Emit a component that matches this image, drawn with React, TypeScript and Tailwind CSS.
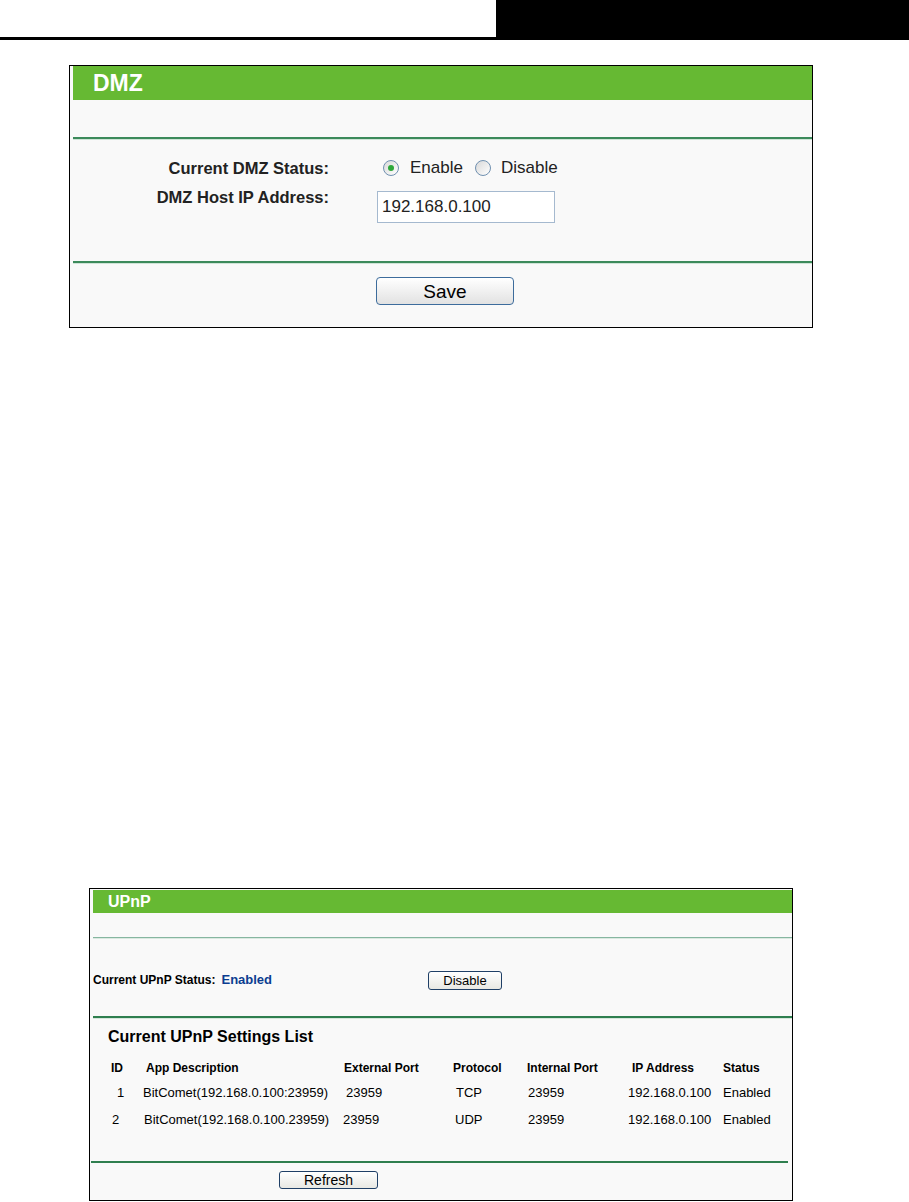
import React from "react";

const font = { fontFamily: '"Liberation Sans", Arial, sans-serif' };

function Radio({ checked }: { checked?: boolean }) {
  return (
    <span className="flex h-[16px] w-[16px] shrink-0 items-center justify-center rounded-full border border-[#7090b0] bg-linear-to-br from-[#d9d9d9] to-[#ffffff]">
      {checked && <span className="h-[6px] w-[6px] rounded-full bg-[#2da83a]" />}
    </span>
  );
}

function DarkSep() {
  return (
    <div>
      <div className="h-[2px] bg-[#3c8a5b]" />
      <div className="h-[1px] bg-[#cfe4d7]" />
    </div>
  );
}

function DmzPanel() {
  return (
    <div className="ml-[69px] mt-[25px] h-[263px] w-[744px] border border-black bg-[#f9f9f9]">
      <div className="ml-[3px]">
        <div className="flex h-[34px] items-center bg-[#66b933] pl-[20px] text-[23px] font-bold text-white">
          DMZ
        </div>
        <div className="h-[37px]" />
        <DarkSep />

        {/* status row */}
        <div className="mt-[16px] flex h-[24px] items-center text-[17px] text-[#222]">
          <div className="w-[256px] text-right text-[16.5px] font-bold">Current DMZ Status:</div>
          <div className="ml-[48px] flex items-center">
            <span className="ml-[6px]">
              <Radio checked />
            </span>
            <span className="ml-[11px]">Enable</span>
            <span className="ml-[12px]">
              <Radio />
            </span>
            <span className="ml-[10px]">Disable</span>
          </div>
        </div>

        {/* host row */}
        <div className="mt-[5px] flex items-start text-[#222]">
          <div className="w-[256px] text-right text-[16.5px] font-bold leading-[24px]">DMZ Host IP Address:</div>
          <div className="ml-[48px] mt-[6px] flex h-[32px] w-[178px] items-center border border-[#a5b9cf] bg-white pl-[4px] text-[17px]">
            192.168.0.100
          </div>
        </div>

        <div className="h-[38px]" />
        <DarkSep />

        <div className="mt-[13px] flex">
          <button className="ml-[303px] h-[28px] w-[138px] rounded-[4px] border border-[#3d6c9c] bg-linear-to-b from-[#ffffff] to-[#e2e2e2] text-[19px] leading-none text-black">
            Save
          </button>
        </div>
      </div>
    </div>
  );
}

const cols = "grid grid-cols-[32px_200px_110px_73px_102px_95px_1fr] items-center";

const rows = [
  { id: "1", idPl: "pl-[6px]", app: "BitComet(192.168.0.100:23959)", appPl: "pl-0", ext: "pl-[3px]", proto: "TCP", protoPl: "pl-[3px]" },
  { id: "2", idPl: "pl-[1px]", app: "BitComet(192.168.0.100.23959)", appPl: "pl-[1px]", ext: "pl-0", proto: "UDP", protoPl: "pl-[2px]" },
];

function UpnpPanel() {
  return (
    <div className="ml-[89px] mt-[560px] h-[313px] w-[704px] border border-black bg-[#f9f9f9]">
      <div className="ml-[3px] pt-[1px]">
        <div className="flex h-[23px] items-center bg-[#66b933] pl-[15px] text-[16px] font-bold text-white">
          UPnP
        </div>
        <div className="h-[24px]" />
        <div className="h-[1px] bg-[#86b6a0]" />
        <div className="h-[1px] bg-[#dbe9e1]" />

        <div className="mt-[31px] flex h-[20px] items-center">
          <div className="flex w-[335px] items-center">
            <span className="text-[12px] font-bold text-black">Current UPnP Status:</span>
            <span className="ml-[6px] text-[13px] font-bold text-[#0b3d91]">Enabled</span>
          </div>
          <button className="h-[19px] w-[74px] rounded-[3px] border border-[#1f3f66] bg-linear-to-b from-[#ffffff] to-[#e8e8e3] text-[13px] leading-none text-black">
            Disable
          </button>
        </div>

        <div className="mt-[26px] h-[2px] bg-[#2f7f4f]" />
        <div className="h-[1px] bg-[#d6e7dc]" />

        <div className="mt-[8px] flex h-[20px] items-center pl-[15px] text-[16px] font-bold text-black">
          Current UPnP Settings List
        </div>

        <div className="pl-[18px] text-black">
          <div className={`${cols} mt-[11px] h-[20px] text-[12px] font-bold`}>
            <div>ID</div>
            <div className="pl-[3px]">App Description</div>
            <div className="pl-[1px]">External Port</div>
            <div>Protocol</div>
            <div className="pl-[1px]">Internal Port</div>
            <div className="pl-[4px]">IP Address</div>
            <div>Status</div>
          </div>
          {rows.map((r, i) => (
            <div key={r.id} className={`${cols} h-[20px] text-[13px] ${i === 0 ? "mt-[5px]" : "mt-[7px]"}`}>
              <div className={r.idPl}>{r.id}</div>
              <div className={r.appPl}>{r.app}</div>
              <div className={r.ext}>23959</div>
              <div className={r.protoPl}>{r.proto}</div>
              <div className="pl-[2px]">23959</div>
              <div>192.168.0.100</div>
              <div>Enabled</div>
            </div>
          ))}
        </div>

        <div className="-ml-[2px] mr-[4px] mt-[31px] h-[2px] bg-[#2f7f4f]" />

        <div className="mt-[8px] flex">
          <button className="ml-[186px] h-[18px] w-[99px] rounded-[3px] border border-[#1f3f66] bg-linear-to-b from-[#ffffff] to-[#e8e8e3] text-[14px] leading-none text-black">
            Refresh
          </button>
        </div>
      </div>
    </div>
  );
}

export default function App() {
  return (
    <div className="h-[1202px] w-[909px] overflow-hidden bg-white" style={font}>
      <div className="flex h-[40px]">
        <div className="w-[496px] border-b-[3px] border-black" />
        <div className="flex-1 bg-black" />
      </div>
      <DmzPanel />
      <UpnpPanel />
    </div>
  );
}
